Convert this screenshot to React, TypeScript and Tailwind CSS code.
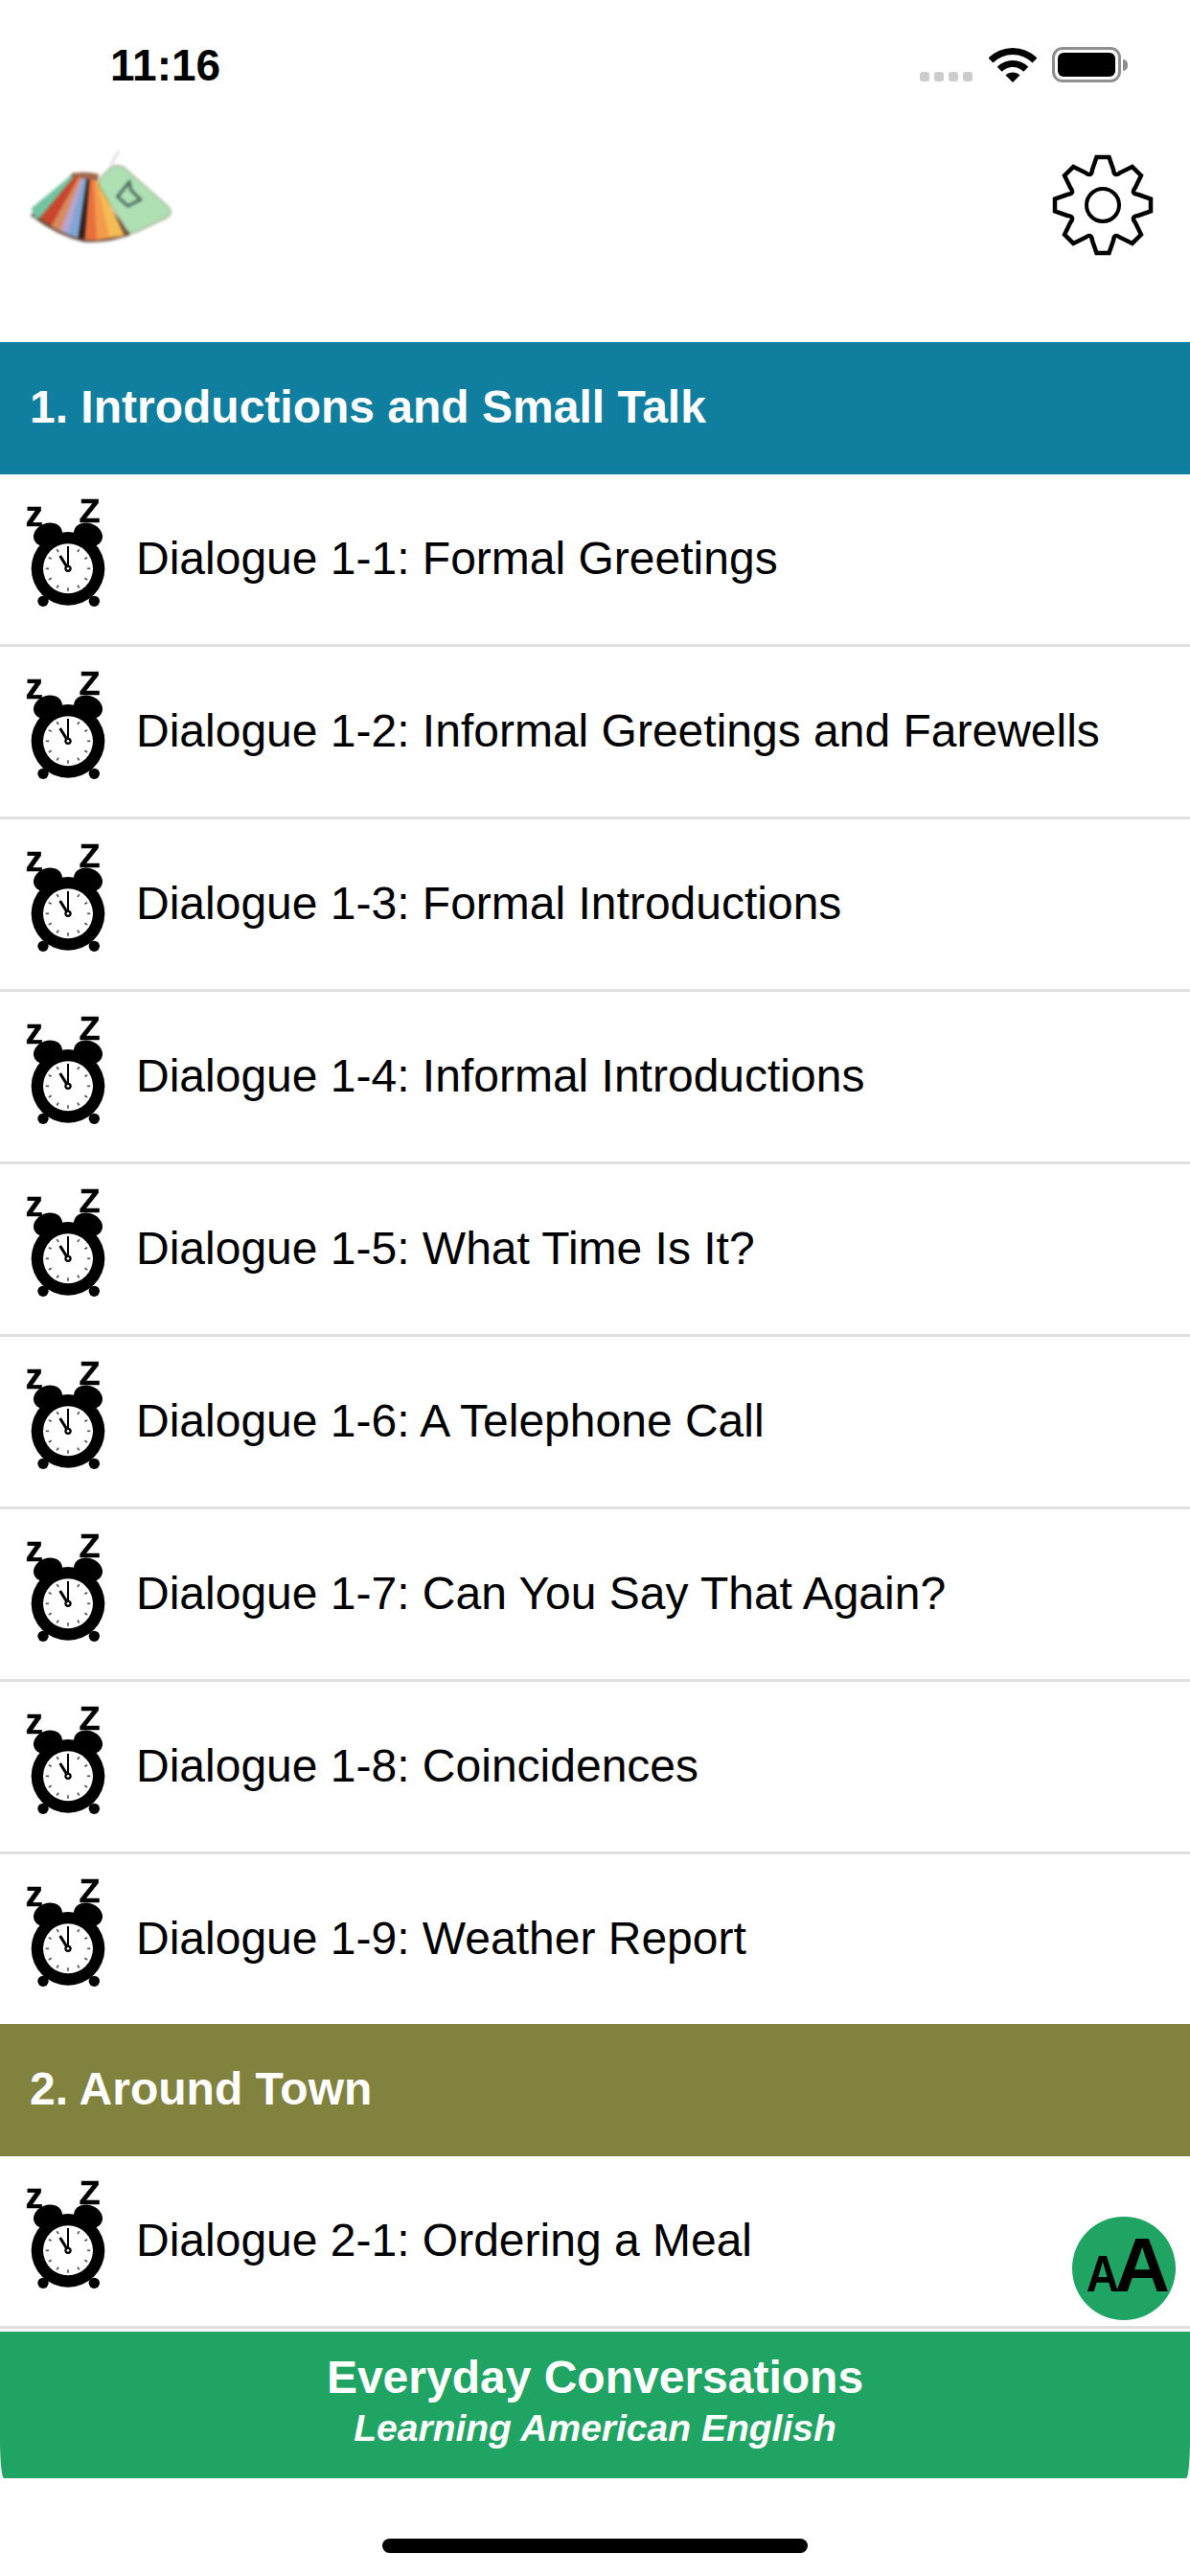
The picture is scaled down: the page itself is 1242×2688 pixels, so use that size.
const rows1 = [
  "Dialogue 1-1: Formal Greetings",
  "Dialogue 1-2: Informal Greetings and Farewells",
  "Dialogue 1-3: Formal Introductions",
  "Dialogue 1-4: Informal Introductions",
  "Dialogue 1-5: What Time Is It?",
  "Dialogue 1-6: A Telephone Call",
  "Dialogue 1-7: Can You Say That Again?",
  "Dialogue 1-8: Coincidences",
  "Dialogue 1-9: Weather Report",
];

function gearPath() {
  const n = 8;
  const pt = (a: number, r: number, w: number) => {
    const c = Math.cos(a), s = Math.sin(a);
    return `${(c * r - s * w).toFixed(2)} ${(s * r + c * w).toFixed(2)}`;
  };
  let d = "M" + pt(0, 37, -11);
  for (let i = 0; i < n; i++) {
    const a = (i * 2 * Math.PI) / n;
    const next = ((i + 1) * 2 * Math.PI) / n;
    const mid = a + Math.PI / n;
    d += " L" + pt(a, 50, -6.5) + " L" + pt(a, 50, 6.5) + " L" + pt(a, 37, 11);
    d += " Q" + pt(mid, 31, 0) + " " + pt(next, 37, -11);
  }
  return d + "Z";
}

function Gear() {
  return (
    <svg viewBox="-55 -55 110 110" className="w-[110px] h-[110px] blur-[0.5px]">
      <path d={gearPath()} fill="none" stroke="#000" strokeWidth="4.5" strokeLinejoin="miter" />
      <circle r="17" fill="none" stroke="#000" strokeWidth="4" />
    </svg>
  );
}

function Clock() {
  const ticks = Array.from({ length: 12 }, (_, i) => i);
  return (
    <svg viewBox="60 60 360 480" className="w-[120px] h-[160px] shrink-0 self-start mt-[15px] mr-[2px] blur-[0.4px]">
      <ellipse cx="150" cy="204" rx="46" ry="36" fill="#000" transform="rotate(-20 150 204)" />
      <ellipse cx="276" cy="204" rx="46" ry="36" fill="#000" transform="rotate(20 276 204)" />
      <circle cx="135" cy="412" r="17" fill="#000" />
      <circle cx="295" cy="412" r="17" fill="#000" />
      <circle cx="213" cy="310" r="115" fill="#000" />
      <circle cx="213" cy="310" r="78" fill="#fff" />
      {ticks.map((i) => {
        const a = (i * Math.PI) / 6;
        return (
          <line
            key={i}
            x1={213 + Math.sin(a) * 60}
            y1={310 - Math.cos(a) * 60}
            x2={213 + Math.sin(a) * 70}
            y2={310 - Math.cos(a) * 70}
            stroke="#555"
            strokeWidth="5"
          />
        );
      })}
      <line x1="213" y1="310" x2="213" y2="240" stroke="#000" strokeWidth="6" />
      <line x1="213" y1="310" x2="188" y2="270" stroke="#000" strokeWidth="9" />
      <circle cx="213" cy="310" r="11" fill="#000" />
      <circle cx="213" cy="310" r="4" fill="#fff" />
      <text x="80" y="177" fontFamily="Liberation Sans" fontWeight="700" fontSize="108" fill="#000" stroke="#000" strokeWidth="2">z</text>
      <text x="248" y="164" fontFamily="Liberation Sans" fontWeight="700" fontSize="106" fill="#000" stroke="#000" strokeWidth="2">Z</text>
    </svg>
  );
}

function Logo() {
  const slices: [string, string][] = [
    ["#74c3a0", "98,262 222,160 240,165 130,290 110,295"],
    ["#c8452c", "125,292 235,160 250,165 165,320"],
    ["#d98a5e", "160,318 245,165 258,168 190,335"],
    ["#b9a4cf", "188,332 252,168 268,170 215,345"],
    ["#7fa6d6", "212,345 262,170 275,172 245,355"],
    ["#2c1d18", "245,355 272,170 284,172 265,360"],
    ["#e9703d", "265,360 280,172 296,172 305,362"],
    ["#f39a4b", "303,362 292,172 306,180 345,355"],
    ["#f5bb55", "343,355 302,178 316,190 390,348"],
  ];
  return (
    <svg viewBox="0 0 660 480" className="w-[220px] h-[160px] blur-[1.5px]">
      <path d="M95 285 Q180 350 265 368 Q340 372 410 345 L300 200 L230 150 Z" fill="#6f5144" />
      <path d="M230 152 Q270 145 310 155 L300 200 L240 190 Z" fill="#a2684c" />
      {slices.map(([c, p]) => (
        <polygon key={p} points={p} fill={c} />
      ))}
      <path
        d="M345 135 Q365 122 390 135 L525 255 Q545 275 525 290 L425 338 Q405 345 395 328 L312 195 Q305 170 325 155 Z"
        fill="#aee0b4"
        stroke="#8d8a66"
        strokeWidth="3"
      />
      <path d="M368 225 L405 180 L410 205 L440 235 L400 255 Z" fill="none" stroke="#4d6a5c" strokeWidth="9" />
      <line x1="372" y1="82" x2="346" y2="128" stroke="#d8c8c8" strokeWidth="5" />
    </svg>
  );
}

function StatusIcons() {
  return (
    <div className="flex items-end">
      <div className="flex gap-[5px] mb-[1px] mr-[17px]">
        <div className="w-[10px] h-[10px] rounded-[3px] bg-[#cccccc]" />
        <div className="w-[10px] h-[10px] rounded-[3px] bg-[#cccccc]" />
        <div className="w-[10px] h-[10px] rounded-[3px] bg-[#cccccc]" />
        <div className="w-[10px] h-[10px] rounded-[3px] bg-[#cccccc]" />
      </div>
      <svg viewBox="-25 -37 50 37" className="w-[50px] h-[37px] mr-[16px]">
        <path d="M-25.5 -25.5 A36 36 0 0 1 25.5 -25.5 L20.5 -20.5 A29 29 0 0 0 -20.5 -20.5 Z" fill="#000" />
        <path d="M-16.3 -16.3 A23 23 0 0 1 16.3 -16.3 L11.3 -11.3 A16 16 0 0 0 -11.3 -11.3 Z" fill="#000" />
        <path d="M-7.5 -7.5 A10.6 10.6 0 0 1 7.5 -7.5 L0 0 Z" fill="#000" />
      </svg>
      <div className="flex items-center">
        <div className="w-[72px] h-[37px] rounded-[11px] border-[3px] border-[#8e8e8e] p-[3px]">
          <div className="w-full h-full rounded-[6px] bg-black" />
        </div>
        <div className="w-[5px] h-[12px] ml-[2px] rounded-r-[5px] bg-[#8e8e8e]" />
      </div>
    </div>
  );
}

function Row({ label, border }: { label: string; border: boolean }) {
  return (
    <div className={`flex items-center bg-white pl-5 ${border ? "h-[180px] border-b-[3px] border-[#e0e0e0]" : "h-[177px]"}`}>
      <Clock />
      <span className="text-[48px] leading-none text-black mb-[2px]">{label}</span>
    </div>
  );
}

function SectionHeader({ label, color }: { label: string; color: string }) {
  return (
    <div className={`h-[138px] flex items-center pl-[31px] pb-[2px] text-white font-bold text-[48px] ${color}`}>{label}</div>
  );
}

export default function App() {
  return (
    <div className="relative w-[1242px] h-[2688px] overflow-hidden bg-white flex flex-col font-['Liberation_Sans',Arial,sans-serif]">
      <div className="h-[130px] pt-[49px] pl-[115px] pr-[65px] flex justify-between items-start">
        <span className="text-[46px] leading-[40px] font-bold text-black -mt-[1px]">11:16</span>
        <StatusIcons />
      </div>
      <div className="h-[227px] flex justify-between items-start pr-[36px]">
        <Logo />
        <div className="mt-[29px]">
          <Gear />
        </div>
      </div>
      <SectionHeader label="1. Introductions and Small Talk" color="bg-[#0f7e9f]" />
      {rows1.map((r, i) => (
        <Row key={r} label={r} border={i < rows1.length - 1} />
      ))}
      <SectionHeader label="2. Around Town" color="bg-[#80823e]" />
      <Row label="Dialogue 2-1: Ordering a Meal" border />
      <div className="mt-[3px] h-[153px] flex flex-col items-center bg-[#1fa463] rounded-b-[4px_40px] text-white">
        <div className="mt-[20px] text-[48px] leading-[56px] font-bold">Everyday Conversations</div>
        <div className="text-[39px] leading-[50px] font-bold italic">Learning American English</div>
      </div>
      <div className="mt-[63px] mx-auto w-[444px] h-[15px] rounded-full bg-black" />
      <div className="absolute left-[1119px] top-[2313px] w-[108px] h-[108px] rounded-full bg-[#1fa463] flex items-baseline justify-end pr-[6px] text-black font-bold leading-none pt-[11px]">
        <span className="inline-block text-[54px] -mr-[5px] scale-x-[0.88] origin-right">A</span>
        <span className="text-[80px]">A</span>
      </div>
    </div>
  );
}
